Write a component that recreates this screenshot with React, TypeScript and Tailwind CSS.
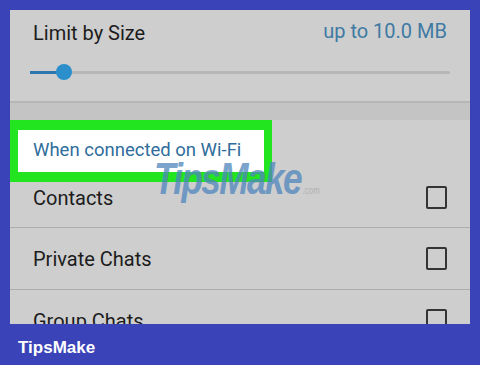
import React from "react";

/* ---------------- TYPES ---------------- */

interface Row {
  label: string;
}

const rows: Row[] = [{ label: "Private Chats" }, { label: "Group Chats" }];

/* ---------------- CHECKBOX ---------------- */
const Box = () => (
  <div className="w-[21px] h-[23px] border-2 border-[#343434] rounded-[2px] shrink-0" />
);

/* ---------------- APP ---------------- */
export default function App() {
  return (
    <div
      className="w-[480px] h-[365px] bg-[#3a43b7] flex flex-col overflow-hidden relative"
      style={{ fontFamily: "Roboto, 'Noto Sans', sans-serif" }}
    >
      <div className="mt-[10px] mx-[10px] h-[314px] shrink-0 bg-[#cecece] overflow-hidden flex flex-col">
        {/* LIMIT BY SIZE */}
        <div className="h-[91px] shrink-0 px-[23px] pt-[11px] flex flex-col">
          <div className="flex justify-between items-center h-[24px]">
            <span className="text-[20px] text-[#1c1c1c]">Limit by Size</span>
            <span className="text-[20px] text-[#3e7aa3] -mt-[4px]">up to 10.0 MB</span>
          </div>
          <div className="relative mt-[19px] -mx-[3px] h-[16px] flex items-center">
            <div className="w-full h-[3px] bg-[#b7b7b7] rounded-full" />
            <div className="absolute left-0 w-[34px] h-[3px] bg-[#2c77ad]" />
            <div className="absolute left-[26px] w-[16px] h-[16px] rounded-full bg-[#2a8fcb]" />
          </div>
        </div>

        {/* SECTION SHADOW */}
        <div className="h-[19px] shrink-0 bg-[#c4c4c4] border-t-2 border-[#b6b6b6]" />

        {/* HEADER (highlighted) */}
        <div className="h-[62px] shrink-0 border-x-[8px] border-y-[10px] border-[#22e51f] w-[262px] bg-white flex items-center px-[15px]">
          <span className="text-[18.5px] text-[#2f6d9c]">When connected on Wi-Fi</span>
        </div>

        {/* CONTACTS */}
        <div className="h-[46px] shrink-0 pb-[14px] px-[23px] flex justify-between items-center border-b border-[#adadad]">
          <span className="text-[20px] text-[#1c1c1c]">Contacts</span>
          <Box />
        </div>

        {rows.map((r) => (
          <div
            key={r.label}
            className="h-[62px] shrink-0 px-[23px] flex justify-between items-center border-b border-[#adadad]"
          >
            <span className="text-[20px] text-[#1c1c1c]">{r.label}</span>
            <Box />
          </div>
        ))}
      </div>

      {/* FOOTER */}
      <div className="flex-1 flex items-center px-[18px] pt-[6px]">
        <span
          className="text-white text-[17px] font-bold"
          style={{ fontFamily: "'Liberation Sans', Arial, sans-serif" }}
        >
          TipsMake
        </span>
      </div>

      {/* WATERMARK */}
      <div
        className="absolute left-[154px] top-[157px] flex items-end opacity-75 pointer-events-none origin-left scale-x-[0.8]"
        style={{ fontFamily: "'Liberation Sans', Arial, sans-serif" }}
      >
        <span className="text-[44px] font-bold italic text-[#4f86bd] tracking-[-2px] leading-none">
          TipsMake
        </span>
        <span className="text-[10px] text-[#a9a9a9] ml-[2px] mb-[3px]">.com</span>
      </div>
    </div>
  );
}
